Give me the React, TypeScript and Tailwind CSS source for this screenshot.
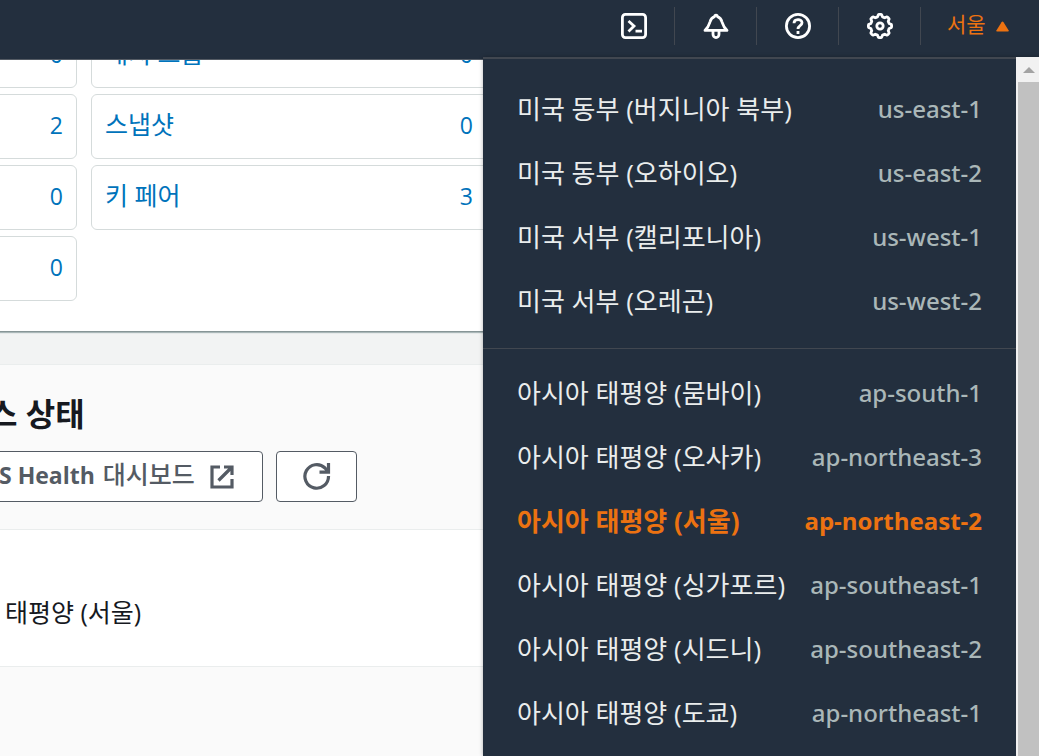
import type { ReactNode } from "react";

type Region = { name: string; code: string; active?: boolean };

const northAmerica: Region[] = [
  { name: "미국 동부 (버지니아 북부)", code: "us-east-1" },
  { name: "미국 동부 (오하이오)", code: "us-east-2" },
  { name: "미국 서부 (캘리포니아)", code: "us-west-1" },
  { name: "미국 서부 (오레곤)", code: "us-west-2" },
];

const asiaPacific: Region[] = [
  { name: "아시아 태평양 (뭄바이)", code: "ap-south-1" },
  { name: "아시아 태평양 (오사카)", code: "ap-northeast-3" },
  { name: "아시아 태평양 (서울)", code: "ap-northeast-2", active: true },
  { name: "아시아 태평양 (싱가포르)", code: "ap-southeast-1" },
  { name: "아시아 태평양 (시드니)", code: "ap-southeast-2" },
  { name: "아시아 태평양 (도쿄)", code: "ap-northeast-1" },
];

// Outline of an eight-toothed wheel around (13, 13)
const gearPoints = Array.from({ length: 96 }, (_, i) => {
  const angle = (i / 96) * Math.PI * 2;
  const wave = Math.max(-1, Math.min(1, 1.8 * Math.cos(8 * angle)));
  const radius = 10.5 + 1.1 * wave;
  return `${(13 + radius * Math.cos(angle)).toFixed(2)},${(13 + radius * Math.sin(angle)).toFixed(2)}`;
}).join(" ");

function NavButton({ label, children }: { label: string; children: ReactNode }) {
  return (
    <button
      type="button"
      aria-label={label}
      className="flex h-[38px] w-[82px] items-center justify-center border-r border-[#414750] text-white"
    >
      <svg viewBox="0 0 26 26" className="size-[26px]" fill="none" stroke="currentColor" strokeWidth="2.8">
        {children}
      </svg>
    </button>
  );
}

function RegionList({ regions }: { regions: Region[] }) {
  return (
    <ul>
      {regions.map((r) => (
        <li key={r.code}>
          <a
            href={`#${r.code}`}
            className={
              r.active
                ? "flex h-16 items-center justify-between px-[34px] font-bold text-[#ec7211]"
                : "flex h-16 items-center justify-between px-[34px] text-[#eaeded]"
            }
          >
            <span className="text-[26px] whitespace-nowrap">{r.name}</span>
            <span
              className={
                r.active
                  ? "text-[24px] whitespace-nowrap"
                  : "font-['Noto_Sans',sans-serif] text-[24px] font-medium whitespace-nowrap text-[#aab7b8]"
              }
            >
              {r.code}
            </span>
          </a>
        </li>
      ))}
    </ul>
  );
}

function ResourceCard({ name, count }: { name?: string; count: number }) {
  return (
    <a
      href="#resource"
      className={
        name
          ? "-mr-2 flex h-[65px] items-center justify-between rounded-md border border-[#d5dbdb] pr-[17px] pb-[3px] pl-[13px] text-[#0073bb]"
          : "-ml-2 flex h-[65px] items-center justify-end rounded-md border border-[#d5dbdb] px-[13px] pb-[3px] text-[#0073bb]"
      }
    >
      {name && <span className="text-[25px]">{name}</span>}
      <span className="text-[23px]">{count}</span>
    </a>
  );
}

export default function App() {
  return (
    <div className="relative flex h-screen flex-col overflow-hidden font-['Open_Sans','Noto_Sans_CJK_KR',sans-serif] text-[#16191f]">
      <header className="flex h-[60px] shrink-0 items-start justify-end border-b border-[#545b64] bg-[#232f3e] pt-[7px]">
        <NavButton label="CloudShell">
          <rect x="1.4" y="1.4" width="23.2" height="23.2" rx="3" />
          <path d="M7.500 8 13 13l-5.500 5.500M14.500 18.200h6.500" />
        </NavButton>
        <NavButton label="알림">
          <path
            d="M2 17.400C5.500 14.500 6 12 7 8.800C7.800 6 9.500 4.300 11.500 3.600C11.800 1.500 14.200 1.500 14.500 3.600C16.500 4.300 18.200 6 19 8.800C20 12 20.500 14.500 24 17.400Z"
            strokeLinejoin="round"
          />
          <path d="M10 18v3.200a3 3.400 0 0 0 6 0V18" />
        </NavButton>
        <NavButton label="도움말">
          <circle cx="13" cy="13" r="11.600" />
          <path d="M9 10.300C9 5.500 17 5.500 17 9.800c0 3-4 2.700-4 6.200M13 18v3" />
        </NavButton>
        <NavButton label="설정">
          <polygon points={gearPoints} strokeLinejoin="round" />
          <circle cx="13" cy="13" r="3.200" />
        </NavButton>
        <button type="button" className="flex h-[38px] w-[118px] items-center gap-[10px] pb-[2px] pl-[26px] text-[21px] text-[#ec7211]">
          서울
          <svg viewBox="0 0 13 11" className="mt-[3px] h-[11px] w-[13px]" fill="currentColor">
            <path d="M6.500 0.500Q7 0.500 7.500 1.300L12.500 9.300Q13 10.500 12 10.500H1Q0 10.500 0.500 9.300L5.500 1.300Q6 0.500 6.500 0.500Z" />
          </svg>
        </button>
      </header>

      <main className="flex min-h-0 flex-1 flex-col overflow-hidden bg-[#f2f3f3]">
        <section className="flex h-[272px] shrink-0 flex-col justify-end border-b border-[#879596] bg-white pb-[30px] shadow-[0_1px_1px_#aab7b8]">
          <div className="grid grid-cols-[77px_392px] gap-x-[14px] gap-y-[6px]">
            <ResourceCard count={0} />
            <ResourceCard name="배치 그룹" count={0} />
            <ResourceCard count={2} />
            <ResourceCard name="스냅샷" count={0} />
            <ResourceCard count={0} />
            <ResourceCard name="키 페어" count={3} />
            <ResourceCard count={0} />
          </div>
        </section>

        <section className="mt-8 flex flex-1 flex-col border-t border-[#eaeded] bg-[#fafafa]">
          <div className="flex flex-col gap-3 border-b border-[#eaeded] pt-6 pb-[27px]">
            <h2 className="-ml-3 text-[32px] leading-[50px] font-bold">스 상태</h2>
            <div className="flex gap-[13px] text-[#545b64]">
              <a
                href="#health"
                className="-ml-2 flex h-[51px] w-[271px] items-center justify-between rounded-sm border border-[#545b64] bg-white pr-7 pl-[6px]"
              >
                <span className="flex items-baseline gap-2 pb-[3px] whitespace-nowrap">
                  <span className="text-[23px] font-bold">S Health</span>
                  <span className="text-[25px] font-medium">대시보드</span>
                </span>
                <svg viewBox="0 0 24 24" className="size-6" fill="none" stroke="currentColor" strokeWidth="3.200">
                  <path d="M10 2H2v20h20V14M14 2h8v8M22 2 8.500 15.500" />
                </svg>
              </a>
              <button
                type="button"
                aria-label="새로 고침"
                className="flex h-[51px] w-[81px] items-center justify-center rounded-sm border border-[#545b64] bg-white pb-[2px]"
              >
                <svg viewBox="0 0 28 28" className="size-7" fill="none" stroke="currentColor" strokeWidth="3.200">
                  <path d="M25.500 14A11.800 11.800 0 1 1 22 6L24.500 9M25.500 1v9.200h-9" />
                </svg>
              </button>
            </div>
          </div>
          <div className="h-[137px] border-b border-[#eaeded] bg-white pt-16 pl-[5px] text-[25px] leading-9">태평양 (서울)</div>
        </section>
      </main>

      <nav
        aria-label="리전"
        className="absolute top-[57px] right-0 bottom-0 z-30 flex w-[556px] overflow-hidden bg-[#232f3e] shadow-[0_0_4px_rgba(0,0,0,0.3)]"
      >
        <div className="min-w-0 flex-1 border-t-2 border-[#414750]">
          <div className="border-b border-[#414750] pt-[18px] pb-[15px]">
            <RegionList regions={northAmerica} />
          </div>
          <div className="pt-[12px]">
            <RegionList regions={asiaPacific} />
          </div>
        </div>
        <div className="flex w-[23px] flex-col bg-[#f1f1f1] pl-[2px]">
          <div className="flex h-[25px] items-center justify-center">
            <svg viewBox="0 0 12 6" className="h-[6px] w-3" fill="#a3a3a3">
              <path d="M6 0 12 6H0Z" />
            </svg>
          </div>
          <div className="flex-1 bg-[#c1c1c1]" />
        </div>
      </nav>
    </div>
  );
}
